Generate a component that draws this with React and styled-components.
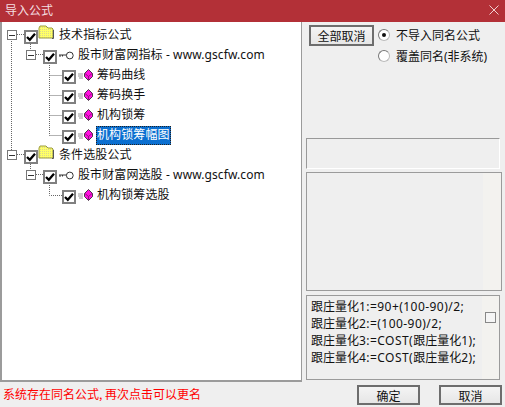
import React from "react";
import styled, { createGlobalStyle } from "styled-components";

const Global = createGlobalStyle`
  html, body { margin: 0; padding: 0; background: #efefef; }
  body { font-family: "Noto Sans", "Noto Sans CJK SC", sans-serif; font-size: 12px; color: #111; }
`;

const Window = styled.div`
  width: 505px; height: 407px; display: flex; flex-direction: column;
  background: #efefef; overflow: hidden;
`;
const TitleBar = styled.div`
  height: 22px; flex: none; background: #b33037; color: #f4dfe0;
  display: flex; align-items: center; justify-content: space-between;
  padding: 0 6px 2px 5px; box-sizing: border-box; line-height: 20px;
  font-family: "Noto Sans CJK SC", sans-serif; font-size: 12px;
`;
const Main = styled.div`display: flex; height: 360px; flex: none;`;
const TreePanel = styled.div`
  position: relative; width: 302px; height: 360px; box-sizing: border-box; flex: none;
  background: #fff; border-left: 2px solid #9b9b9b; border-bottom: 2px solid #9b9b9b; border-right: 1px solid #9b9b9b;
  padding-top: 3px;
`;
const Guides = styled.svg`position: absolute; left: -2px; top: 0; width: 304px; height: 358px; pointer-events: none;`;
const Row = styled.div`
  position: relative; height: 20px; display: flex; align-items: center; padding-left: ${p => p.$indent}px;
`;
const Expander = styled.span`
  width: 10px; height: 10px; box-sizing: border-box; border: 1.5px solid #777; background: #fff;
  display: flex; align-items: center; justify-content: center; flex: none; margin-right: 7px;
  &::after { content: ""; width: 6px; height: 1px; background: #333; }
`;
const Check = styled.span`
  width: 14px; height: 14px; box-sizing: border-box; border: 2px solid #808080; background: #fff; flex: none;
  margin-top: 4px; display: flex; align-items: center; justify-content: center;
`;
const Label = styled.span`
  margin-left: ${p => p.$gap ?? 3}px; white-space: nowrap; line-height: 18px; padding: 0 1px;
  font-family: "Noto Sans", "Noto Sans CJK SC", sans-serif; color: #111; letter-spacing: 0.1px;
  ${p => p.$selected && `
    background: #0b6fd0; color: #fff; outline: 1px dotted #222; outline-offset: -1px; height: 19px;
  `}
`;
const Side = styled.div`flex: 1; padding: 3px 3px 0 4px; display: flex; flex-direction: column; min-width: 0;`;
const TopRow = styled.div`display: flex; align-items: flex-start; gap: 4px; height: 113px; flex: none; padding-left: 3px;`;
const ActionButton = styled.button`
  width: ${p => p.$w}px; height: ${p => p.$h}px; box-sizing: border-box; border: 2px solid #6d6d6d;
  background: linear-gradient(#f4f4f4, #e6e6e6); color: #111; padding: 0; flex: none;
  font: 12px "Noto Sans CJK SC", sans-serif; letter-spacing: 0;
`;
const Radios = styled.div`display: flex; flex-direction: column; gap: 2px; padding-top: 0;`;
const RadioRow = styled.div`display: flex; align-items: center; gap: 6px; height: 19px; white-space: nowrap;`;
const Radio = styled.span`
  width: 12px; height: 12px; border-radius: 50%; box-sizing: border-box; background: #fff; flex: none;
  border: 1px solid #bbb; border-top-color: #777; border-left-color: #777;
  display: flex; align-items: center; justify-content: center;
  &::after { content: ""; width: 4px; height: 4px; border-radius: 50%; background: ${p => p.$on ? "#111" : "transparent"}; }
`;
const EmptyGroup = styled.div`
  width: 194px; height: 31px; box-sizing: border-box; flex: none; margin-top: 0;
  border: 1px solid #fff; border-top: 1px solid #999; border-left: 1px solid #999;
`;
const ListBox = styled.div`
  width: 196px; height: 119px; box-sizing: border-box; flex: none; margin-top: 3px;
  border: 1px solid #9b9b9b; outline: 1px solid #efefef; background: linear-gradient(90deg, #efefef 0 176px, #f3f2ef 176px);
`;
const CodeBox = styled.div`
  position: relative; width: 194px; height: 85px; box-sizing: border-box; flex: none; margin-top: 4px;
  border: 1px solid #9b9b9b; padding: 2px 0 0 4px;
  background: linear-gradient(90deg, #efefef 0 175px, #f3f2ef 175px);
`;
const CodeLine = styled.div`height: 17.1px; line-height: 17.1px; white-space: nowrap; color: #111;`;
const Ascii = styled.span`letter-spacing: 0.45px;`;
const SmallBox = styled.span`
  position: absolute; left: 178px; top: 16px; width: 9px; height: 9px; border: 1px solid #888; background: #f5f5f5;
`;
const Footer = styled.div`display: flex; align-items: center; flex: 1; padding: 0 3px 0 3px;`;
const Status = styled.div`
  flex: 1; color: #f00; font: 12px "Noto Sans CJK SC", sans-serif; letter-spacing: 0; padding-bottom: 2px;
`;
const FooterButtons = styled.div`display: flex; gap: 19px; padding-top: 1px;`;

const Tick = () => (
  <svg width="10" height="10" viewBox="0 0 10 10"><path d="M1 5 L3.8 7.8 L9 1.8" fill="none" stroke="#000" strokeWidth="2.3" /></svg>
);
const Folder = () => (
  <svg width="16" height="14" viewBox="0 0 16 14" style={{ marginTop: -6, flex: "none" }}>
    <defs>
      <pattern id="dither" width="2" height="2" patternUnits="userSpaceOnUse">
        <rect width="2" height="2" fill="#ffff66" /><rect width="1" height="1" fill="#d8d890" />
      </pattern>
    </defs>
    <path d="M1 3 L2 1 H8 L10 3 H14 L15 4 V13 H1 Z" fill="url(#dither)" stroke="#9a9a40" />
    <path d="M14 13.5 H15.5 V5" fill="none" stroke="#555" />
  </svg>
);
const KeyIcon = () => (
  <svg width="15" height="9" viewBox="0 0 15 9" style={{ marginLeft: 2, flex: "none" }}>
    <circle cx="10.8" cy="4.5" r="3.4" fill="#fff" stroke="#333" />
    <path d="M0 4 H7.5 M1 4 V6 M3.5 4 V5.5" stroke="#333" fill="none" />
  </svg>
);
const GemIcon = () => (
  <svg width="15" height="12" viewBox="0 0 15 12" style={{ marginLeft: 2, flex: "none" }}>
    <path d="M0 5 H5 M0 7 H5 M1 9 H5" stroke="#999" />
    <path d="M10.5 0.5 L14.5 4.5 V7.5 L10.5 11.5 L6.5 7.5 V4.5 Z" fill="#ff10e0" stroke="#222" strokeWidth="0.8" />
    <path d="M7 4.5 L10.5 7.5 L14 4.5 M10.5 7.5 V11" fill="none" stroke="#7a1066" strokeWidth="0.8" />
  </svg>
);

const Node = ({ level, expander, icon, text, selected }) => {
  const indents = [5, 24, 60];
  return (
    <Row $indent={indents[level]}>
      {expander && <Expander />}
      <Check><Tick /></Check>
      {icon}
      <Label $gap={level === 0 ? 4 : 3} $selected={selected}>{text}</Label>
    </Row>
  );
};

const dot = { stroke: "#666", strokeWidth: 1, strokeDasharray: "1 1", fill: "none" };

export default function App() {
  return (
    <Window>
      <Global />
      <TitleBar>
        <span>导入公式</span>
        <svg width="10" height="10" viewBox="0 0 10 10"><path d="M0.5 0.5 L9.5 9.5 M9.5 0.5 L0.5 9.5" stroke="#f0d0d0" strokeWidth="1" /></svg>
      </TitleBar>
      <Main>
        <TreePanel>
          <Guides viewBox="0 0 304 358">
            <path {...dot} d="M11.5 17 V133 M17 12.5 H24 M30.5 22 V28 M36 32.5 H43 M49.5 41 V113.5 M49.5 53.5 H62 M49.5 73.5 H62 M49.5 93.5 H62 M49.5 113.5 H62" />
            <path {...dot} d="M17 132.5 H24 M30.5 142 V148 M36 152.5 H43 M49.5 161 V173.5 H62" />
          </Guides>
          <Node level={0} expander icon={<Folder />} text="技术指标公式" />
          <Node level={1} expander icon={<KeyIcon />} text="股市财富网指标 - www.gscfw.com" />
          <Node level={2} icon={<GemIcon />} text="筹码曲线" />
          <Node level={2} icon={<GemIcon />} text="筹码换手" />
          <Node level={2} icon={<GemIcon />} text="机构锁筹" />
          <Node level={2} icon={<GemIcon />} text="机构锁筹幅图" selected />
          <Node level={0} expander icon={<Folder />} text="条件选股公式" />
          <Node level={1} expander icon={<KeyIcon />} text="股市财富网选股 - www.gscfw.com" />
          <Node level={2} icon={<GemIcon />} text="机构锁筹选股" />
        </TreePanel>
        <Side>
          <TopRow>
            <ActionButton $w={65} $h={21}>全部取消</ActionButton>
            <Radios>
              <RadioRow><Radio $on />不导入同名公式</RadioRow>
              <RadioRow><Radio />覆盖同名(非系统)</RadioRow>
            </Radios>
          </TopRow>
          <EmptyGroup />
          <ListBox />
          <CodeBox>
            <CodeLine>跟庄量化<Ascii>1:=90+(100-90)/2;</Ascii></CodeLine>
            <CodeLine>跟庄量化<Ascii>2:=(100-90)/2;</Ascii></CodeLine>
            <CodeLine>跟庄量化<Ascii>3:=COST(</Ascii>跟庄量化<Ascii>1);</Ascii></CodeLine>
            <CodeLine>跟庄量化<Ascii>4:=COST(</Ascii>跟庄量化<Ascii>2);</Ascii></CodeLine>
            <SmallBox />
          </CodeBox>
        </Side>
      </Main>
      <Footer>
        <Status>系统存在同名公式, 再次点击可以更名</Status>
        <FooterButtons>
          <ActionButton $w={63} $h={20}>确定</ActionButton>
          <ActionButton $w={63} $h={20}>取消</ActionButton>
        </FooterButtons>
      </Footer>
    </Window>
  );
}
